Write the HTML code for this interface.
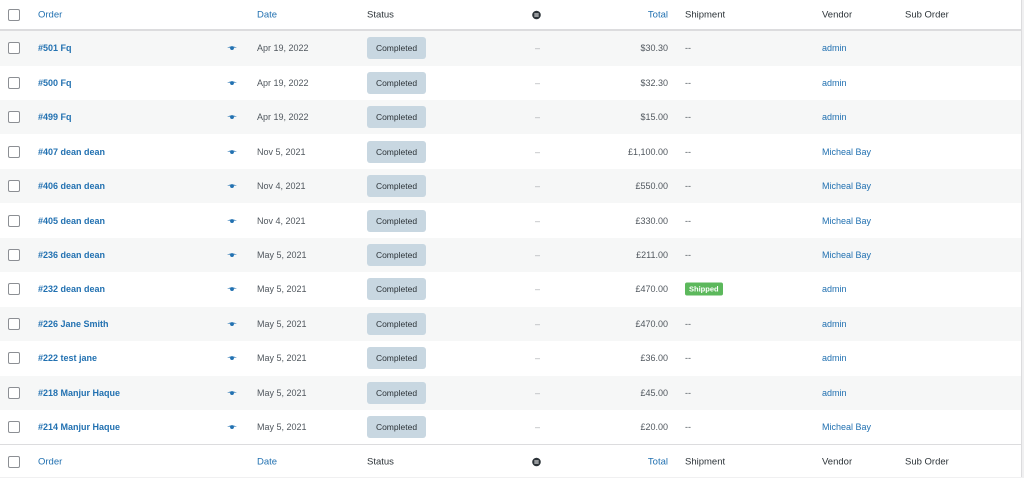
<!DOCTYPE html>
<html><head><style>
body{margin:0;width:1024px;height:477px;background:#f0f0f1;font-family:"Liberation Sans",sans-serif;overflow:hidden;position:relative}
.wrap{position:absolute;left:0;top:0;width:1021px;height:477px;background:#fff;border-right:1px solid #dcdcde}
.row{position:absolute;left:0;width:1021px;height:34.55px;font-size:9px;color:#50575e}
.row.g{background:#f6f7f7}
.row>*{position:absolute;top:50%;transform:translateY(-50%)}
.cb{left:8px;width:10px;height:10px;border:1px solid #8c8f94;border-radius:2px;background:#fff}
.o{left:38px;color:#2271b1;font-weight:bold}
.eye{left:227px;width:10px;height:5px}
.d{left:257px}
.st{left:367px;width:59px;height:22px;background:#c8d7e1;border-radius:3px;text-align:center;line-height:22px;color:#2c3338;font-size:8.5px}
.dash{left:535px;color:#a7aaad}
.t{right:353px}
.sh{left:685px}
.v{left:822px;color:#2271b1}
.hd{position:absolute;left:0;width:1021px;height:29px;font-size:9.5px;color:#2c3338}
.hd>*{position:absolute;top:50%;transform:translateY(-50%)}
.a{color:#2271b1}
.ship{left:685px;background:#5cb85c;color:#fff;font-size:7.5px;padding:2px 4px;border-radius:2px;font-weight:bold}
.ic{left:532px;width:9px;height:9px}
</style></head><body><div class="wrap">
<div class="hd" style="top:0;border-bottom:2px solid #dcdcde"><span class="cb"></span><span class="a" style="left:38px">Order</span><span class="a" style="left:257px">Date</span><span style="left:367px">Status</span><svg class="ic" viewBox="0 0 9 9"><circle cx="4.5" cy="4.5" r="4.3" fill="#2c3338"/><rect x="2.3" y="3" width="4.4" height="1" fill="#fff"/><rect x="2.3" y="5" width="4.4" height="1" fill="#fff"/></svg><span class="a" style="right:353px">Total</span><span style="left:685px">Shipment</span><span style="left:822px">Vendor</span><span style="left:905px">Sub Order</span></div>
<div class="hd" style="top:444px;height:33px;border-top:1px solid #dcdcde"><span class="cb"></span><span class="a" style="left:38px">Order</span><span class="a" style="left:257px">Date</span><span style="left:367px">Status</span><svg class="ic" viewBox="0 0 9 9"><circle cx="4.5" cy="4.5" r="4.3" fill="#2c3338"/><rect x="2.3" y="3" width="4.4" height="1" fill="#fff"/><rect x="2.3" y="5" width="4.4" height="1" fill="#fff"/></svg><span class="a" style="right:353px">Total</span><span style="left:685px">Shipment</span><span style="left:822px">Vendor</span><span style="left:905px">Sub Order</span></div>
<div id="rows"></div>
</div>
<script>
var d=[["#501 Fq","Apr 19, 2022","$30.30","admin"],["#500 Fq","Apr 19, 2022","$32.30","admin"],["#499 Fq","Apr 19, 2022","$15.00","admin"],["#407 dean dean","Nov 5, 2021","£1,100.00","Micheal Bay"],["#406 dean dean","Nov 4, 2021","£550.00","Micheal Bay"],["#405 dean dean","Nov 4, 2021","£330.00","Micheal Bay"],["#236 dean dean","May 5, 2021","£211.00","Micheal Bay"],["#232 dean dean","May 5, 2021","£470.00","admin"],["#226 Jane Smith","May 5, 2021","£470.00","admin"],["#222 test jane","May 5, 2021","£36.00","admin"],["#218 Manjur Haque","May 5, 2021","£45.00","admin"],["#214 Manjur Haque","May 5, 2021","£20.00","Micheal Bay"]];
var h="";d.forEach(function(r,i){h+='<div class="row'+(i%2==0?' g':'')+'" style="top:'+(31+34.45*i)+'px"><span class="cb"></span><span class="o">'+r[0]+'</span><svg class="eye" viewBox="0 0 10 5"><path d="M0 2.5Q5 -1 10 2.5Q5 1.5 0 2.5Z" fill="#2271b1"/><circle cx="5" cy="2.6" r="1.9" fill="#2271b1"/></svg><span class="d">'+r[1]+'</span><span class="st">Completed</span><span class="dash">–</span><span class="t">'+r[2]+'</span>'+(i==7?'<span class="ship">Shipped</span>':'<span class="sh">--</span>')+'<span class="v">'+r[3]+'</span></div>';});
document.getElementById("rows").innerHTML=h;
</script>
</body></html>
